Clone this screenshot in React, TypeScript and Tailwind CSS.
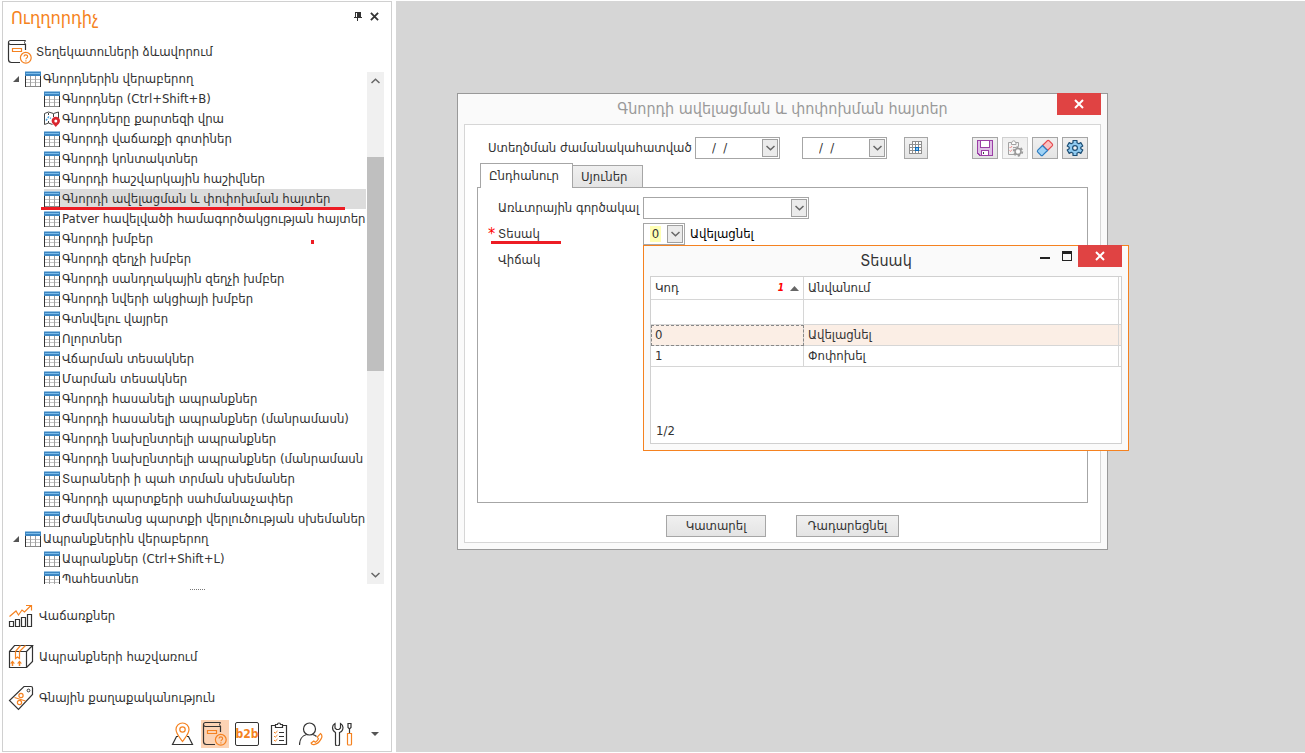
import { useState } from 'react';
import type { ReactNode } from 'react';

const CUSTOMER_ITEMS = [
  'Գնորդներ (Ctrl+Shift+B)',
  'Գնորդները քարտեզի վրա',
  'Գնորդի վաճառքի գոտիներ',
  'Գնորդի կոնտակտներ',
  'Գնորդի հաշվարկային հաշիվներ',
  'Գնորդի ավելացման և փոփոխման հայտեր',
  'Patver հավելվածի համագործակցության հայտեր',
  'Գնորդի խմբեր',
  'Գնորդի զեղչի խմբեր',
  'Գնորդի սանդղակային զեղչի խմբեր',
  'Գնորդի նվերի ակցիայի խմբեր',
  'Գտնվելու վայրեր',
  'Ոլորտներ',
  'Վճարման տեսակներ',
  'Մարման տեսակներ',
  'Գնորդի հասանելի ապրանքներ',
  'Գնորդի հասանելի ապրանքներ (մանրամասն)',
  'Գնորդի նախընտրելի ապրանքներ',
  'Գնորդի նախընտրելի ապրանքներ (մանրամասն',
  'Տարաների ի պահ տրման սխեմաներ',
  'Գնորդի պարտքերի սահմանաչափեր',
  'Ժամկետանց պարտքի վերլուծության սխեմաներ',
];

const GROUPS = [
  { title: 'Գնորդներին վերաբերող', items: CUSTOMER_ITEMS },
  { title: 'Ապրանքներին վերաբերող', items: ['Ապրանքներ (Ctrl+Shift+L)', 'Պահեստներ'] },
];

const MAP_ITEM = CUSTOMER_ITEMS[1];

const TYPES = [
  { code: '0', name: 'Ավելացնել' },
  { code: '1', name: 'Փոփոխել' },
];

/* ---------- icons ---------- */

function TableIcon() {
  return (
    <svg width="16" height="16" viewBox="0 0 16 16" shapeRendering="crispEdges" className="shrink-0">
      <rect width="16" height="16" fill="#fff" />
      <rect width="16" height="1" fill="#9ac4e4" />
      <rect y="1" width="16" height="4" fill="#3c86c2" />
      <rect x="1" y="2" width="14" height="1" fill="#7cbcea" />
      <path d="M1 8.500h14M1 11.500h14" stroke="#c4c4c4" />
      <path d="M5.500 5v10M10.500 5v10" stroke="#a0a0a0" />
      <path d="M0.500 5v11M15.500 5v11" stroke="#333" />
      <path d="M1 15.500h14" stroke="#8a8a8a" />
    </svg>
  );
}

function MapIcon() {
  return (
    <svg width="16" height="16" viewBox="0 0 16 16" fill="none" className="shrink-0">
      <path d="M.5 2.500 4.500 1l5 1.500L14.500 1v6M.5 2.500v11L4.500 12l4 1.500" stroke="#444" />
      <path d="M4.500 2v2M9.500 3v3M4.500 10v2" stroke="#444" />
      <path d="M2 9.500 4.500 6 7 7.500" stroke="#4aa3df" strokeWidth="1.400" strokeDasharray="2 1" />
      <path d="M11.800 16c-2-2.400-4.200-3.800-4.200-6a4.200 4.200 0 1 1 8.400 0c0 2.200-2.200 3.600-4.200 6z" fill="#d9262f" />
      <circle cx="11.800" cy="10" r="1.500" fill="#fff" />
    </svg>
  );
}

function BookIcon() {
  return (
    <svg width="26" height="26" viewBox="0 0 26 26" fill="none" className="shrink-0">
      <path d="M18.500 11V5.500H3.500a2 2 0 0 1 0-4h15M1.500 3.500v17a3 3 0 0 0 3 3H13" stroke="#333" strokeWidth="1.200" />
      <path d="M18.500 1.500l-1 2 1 2" stroke="#333" />
      <path d="M5.500 9.500h9v3h-9z" stroke="#f58220" strokeWidth="1.200" />
      <circle cx="18.800" cy="18.800" r="5.400" stroke="#f58220" strokeWidth="1.200" />
      <path d="M17 17.600c0-2.300 3.600-2.300 3.600-.2 0 1.400-1.700 1.400-1.700 2.900M18.900 21.300v1.200" stroke="#f58220" strokeWidth="1.100" />
    </svg>
  );
}

function SalesIcon() {
  return (
    <svg width="26" height="26" viewBox="0 0 26 26" fill="none" className="shrink-0">
      <path d="M1.500 18.500h4v5h-4zM7.500 16.500h4v7h-4zM13.500 14.500h4v9h-4zM19.500 11.500h4v12h-4z" stroke="#333" strokeWidth="1.200" />
      <path d="M1.500 13.500 8 8l2.500 4L14 7l2.500 2L23 2.500M18 2.500h5.500v5" stroke="#f58220" strokeWidth="1.200" />
    </svg>
  );
}

function BoxIcon() {
  return (
    <svg width="26" height="26" viewBox="0 0 26 26" fill="none" className="shrink-0">
      <path d="M1.500 7.500h17v16h-17zM1.500 7.500l5-6h18l-6 6M24.500 1.500v16l-6 6" stroke="#333" strokeWidth="1.200" />
      <path d="M7.500 7.500v7l2-1.500 2 1.500v-7l6-6M7.500 7.500l5-6" stroke="#f58220" strokeWidth="1.200" />
      <path d="M4.500 22v-4M11.500 22v-4" stroke="#f58220" strokeWidth="1.500" />
      <path d="M2 19.500 4.500 16.500 7 19.500zM9 19.500l2.500-3 2.500 3z" fill="#f58220" />
    </svg>
  );
}

function PriceIcon() {
  return (
    <svg width="26" height="26" viewBox="0 0 26 26" fill="none" className="shrink-0">
      <path d="M16 1.500h7a1.500 1.500 0 0 1 1.500 1.500v6.500L10.500 24.500l-9-9z" stroke="#333" strokeWidth="1.200" />
      <circle cx="20.500" cy="5.500" r="1.400" stroke="#333" />
      <path d="M6.500 12.500l11 3.500" stroke="#f58220" strokeWidth="1.200" />
      <circle cx="13" cy="10.500" r="2.100" stroke="#f58220" strokeWidth="1.200" />
      <circle cx="11.500" cy="17.500" r="2.100" stroke="#f58220" strokeWidth="1.200" />
    </svg>
  );
}

function RouteIcon() {
  return (
    <svg width="24" height="24" viewBox="0 0 24 24" fill="none">
      <path d="M7 14.500H5.500L1.500 22.500h20l-4-8H16" stroke="#333" strokeWidth="1.200" />
      <path d="M11.500 19.500C8 14.500 5 11.500 5 7.500a6.500 6.500 0 0 1 13 0c0 4-3 7-6.500 12z" stroke="#f58220" strokeWidth="1.200" />
      <circle cx="11.500" cy="7.500" r="2.700" stroke="#f58220" strokeWidth="1.200" />
    </svg>
  );
}

function TasksIcon() {
  return (
    <svg width="24" height="24" viewBox="0 0 24 24" fill="none">
      <path d="M8 3.500H4.500v19h15v-19H16" stroke="#333" strokeWidth="1.200" />
      <path d="M8.500 5.500v-3h2a1.500 1.500 0 0 1 3 0h2v3z" stroke="#333" strokeWidth="1.200" />
      <path d="M12 10.500h5M12 14.500h5M12 18.500h5" stroke="#333" strokeWidth="1.200" />
      <path d="M7 10l1.200 1.200L10.500 9M7 14l1.200 1.200 2.300-2.200M7 18l1.200 1.200 2.300-2.200" stroke="#f58220" />
    </svg>
  );
}

function ContactIcon() {
  return (
    <svg width="24" height="24" viewBox="0 0 24 24" fill="none">
      <circle cx="10.500" cy="7" r="6" stroke="#333" strokeWidth="1.200" />
      <path d="M.5 23c0-5 2.500-9.500 7-10.500M13.500 12.500c1.800.3 3 1 4 2" stroke="#333" strokeWidth="1.200" />
      <path d="M21.500 11.500c1.600 1.200 1.800 3.200.6 5.400-1.700 3.100-4.500 5.300-7 5.700-1.600.2-2.700-.6-3-1.600l2.700-2 1.600 1.200c1.400-.8 2.500-2 3.100-3.400l-1.200-1.700z" stroke="#f58220" strokeWidth="1.200" />
    </svg>
  );
}

function ToolsIcon() {
  return (
    <svg width="24" height="24" viewBox="0 0 24 24" fill="none">
      <path d="M4.500 22a2 2 0 0 0 4 0V10.500C11 9.500 12 7.500 12 5.500c0-1.800-1-3.200-2.500-4V6L8 7.500H5.500L4 6V1.500C2.500 2.300 1.500 3.700 1.500 5.500c0 2 1 4 3 5z" stroke="#333" strokeWidth="1.200" />
      <path d="M17 1.500h3v4L18.500 7 17 5.500zM18.500 7v4" stroke="#333" strokeWidth="1.200" />
      <path d="M16.500 11.500h4V22a1 1 0 0 1-1 1h-2a1 1 0 0 1-1-1z" stroke="#f58220" strokeWidth="1.200" />
    </svg>
  );
}

function PinIcon() {
  return (
    <svg width="8" height="9" viewBox="0 0 8 9" shapeRendering="crispEdges">
      <path d="M1 0h6v5h1v1H4v3H3V6H0V5h1zM2 1v4h1V1z" fill="#333" fillRule="evenodd" />
    </svg>
  );
}

function CrossIcon({ size, color }: { size: number; color: string }) {
  return (
    <svg width={size} height={size} viewBox="0 0 10 10">
      <path d="M1 1l8 8M9 1L1 9" stroke={color} strokeWidth="2" />
    </svg>
  );
}

function Chevron({ up = false }: { up?: boolean }) {
  return (
    <svg width="9" height="6" viewBox="0 0 9 6" fill="none">
      <path d={up ? 'M.5 5l4-3.800L8.500 5' : 'M.5 1l4 3.800L8.500 1'} stroke="#666" strokeWidth="1.500" />
    </svg>
  );
}

function GridIcon() {
  return (
    <svg width="14" height="14" viewBox="0 0 14 14" shapeRendering="crispEdges">
      <path d="M3 0h10v13H0V3h3z" fill="#fff" />
      <path d="M3 .5h10M0 3.500h13M0 6.500h13M0 9.500h13M0 12.500h13M.5 3v10M3.500 0v13M6.500 0v13M9.500 0v13M12.500 0v13" stroke="#8f8f8f" />
      <rect x="6" y="6" width="4" height="4" fill="#0a6cbd" />
      <rect x="7" y="7" width="2" height="2" fill="#7cc4f5" />
    </svg>
  );
}

function SaveIcon() {
  return (
    <svg width="18" height="18" viewBox="0 0 18 18" shapeRendering="crispEdges">
      <path d="M1.500 1.500h15v15h-12l-3-2z" fill="#dfbfe6" stroke="#9b3fa6" strokeWidth="1.200" />
      <rect x="4.500" y="1.500" width="9" height="7" fill="#fff" stroke="#9b3fa6" />
      <rect x="5.500" y="11.500" width="7" height="5" fill="#fff" stroke="#9b3fa6" />
      <rect x="7" y="13" width="1" height="2" fill="#444" />
    </svg>
  );
}

function ChecklistIcon() {
  return (
    <svg width="18" height="18" viewBox="0 0 18 18" fill="none">
      <path d="M8.500 15.500h-6v-12h3M9.500 3.500h3v4" stroke="#a2a2a2" />
      <path d="M5.500 5.500v-2H6a1.700 1.700 0 0 1 3.400 0h.6v2z" fill="#fff" stroke="#a2a2a2" />
      <path d="M3.500 8l1 1L6 7M3.500 11.500l1 1 1.500-2" stroke="#ef8f8f" />
      <path d="M7 8.500h3M7 11.500h2" stroke="#a2a2a2" />
      <circle cx="12" cy="12.500" r="3" stroke="#9a9a9a" strokeWidth="1.600" />
      <circle cx="12" cy="12.500" r="4.400" stroke="#9a9a9a" strokeWidth="1.600" strokeDasharray="2.300 2.300" />
      <circle cx="12" cy="12.500" r="1.600" fill="#fff" />
    </svg>
  );
}

function EraserIcon() {
  return (
    <svg width="18" height="18" viewBox="0 0 18 18" strokeLinejoin="round">
      <path d="M6.500 6.500 11.200 1.800a1.500 1.500 0 0 1 2 0l3 3a1.500 1.500 0 0 1 0 2L11.500 11.500z" fill="#fbc1c1" stroke="#e5484d" strokeWidth="1.200" />
      <path d="M6.500 6.500l5 5-4.700 4.700a1.500 1.500 0 0 1-2 0l-3-3a1.500 1.500 0 0 1 0-2z" fill="#9fd2f5" stroke="#2b7cc0" strokeWidth="1.200" />
    </svg>
  );
}

function GearIcon() {
  return (
    <svg width="18" height="18" viewBox="0 0 18 18" strokeLinejoin="round">
      <path
        d="M7 1.500h4v2.200l1.800 1 2-1.100 2 3.400-2 1.200v1.600l2 1.200-2 3.400-2-1.100-1.800 1v2.200H7v-2.200l-1.800-1-2 1.100-2-3.400 2-1.200V8.200l-2-1.200 2-3.400 2 1.100 1.800-1z"
        fill="#8fcaf0"
        stroke="#1d4e74"
        strokeWidth="1.200"
      />
      <circle cx="9" cy="9" r="2.400" fill="#f4f4f4" stroke="#1d4e74" strokeWidth="1.200" />
    </svg>
  );
}

/* ---------- controls ---------- */

function DropButton({ label }: { label: string }) {
  return (
    <button
      aria-label={label}
      className="flex h-[18px] w-4 shrink-0 items-center justify-center border border-[#a0a0a0] bg-[#ebebeb]"
    >
      <Chevron />
    </button>
  );
}

function DateField({ label }: { label: string }) {
  return (
    <div className="flex h-[22px] w-[85px] items-center border border-[#a6a6a6] bg-white pr-px">
      <input aria-label={label} defaultValue="/  /" className="w-full min-w-0 flex-1 pl-4 whitespace-pre outline-none" />
      <DropButton label={label + ' ▾'} />
    </div>
  );
}

function ToolButton({ label, disabled, children }: { label: string; disabled?: boolean; children: ReactNode }) {
  return (
    <button
      aria-label={label}
      disabled={disabled}
      className="flex h-[22px] w-[26px] items-center justify-center border border-[#a6a6a6] bg-linear-to-b from-[#f0f0f0] to-[#e4e4e4] disabled:border-[#d0d0d0] disabled:to-[#f5f5f5]"
    >
      {children}
    </button>
  );
}

function CloseButton() {
  return (
    <button aria-label="Փակել" className="flex h-[22px] w-11 items-center justify-center bg-[#e04343]">
      <CrossIcon size={10} color="#fff" />
    </button>
  );
}

/* ---------- navigator ---------- */

function TreeGroup({ title, items, selected, onSelect }: {
  title: string;
  items: string[];
  selected: string;
  onSelect: (item: string) => void;
}) {
  return (
    <li>
      <button className="flex h-5 w-full items-center gap-0.5 pl-2 text-left whitespace-nowrap">
        <svg width="12" height="8" viewBox="0 0 12 8">
          <path d="M8 1v6H2z" fill="#555" />
        </svg>
        <TableIcon />
        <span>{title}</span>
      </button>
      <ul>
        {items.map((item) => (
          <li key={item} className="pl-[41px]">
            <button
              onClick={() => onSelect(item)}
              className={`flex h-5 w-full items-center gap-0.5 text-left whitespace-nowrap ${item === selected ? 'bg-[#dcdcdc]' : ''}`}
            >
              {item === MAP_ITEM ? <MapIcon /> : <TableIcon />}
              <span>{item}</span>
            </button>
          </li>
        ))}
      </ul>
    </li>
  );
}

function Navigator() {
  const [selected, setSelected] = useState(CUSTOMER_ITEMS[5]);

  return (
    <aside className="relative flex w-[390px] shrink-0 flex-col border border-[#d0d0d0] bg-white">
      <header className="flex h-8 items-center pr-3 pl-2">
        <h1 className="flex-1 text-lg text-[#f58220]">Ուղղորդիչ</h1>
        <div className="flex items-center gap-2 pb-1">
          <button aria-label="Ամրացնել"><PinIcon /></button>
          <button aria-label="Փակել"><CrossIcon size={9} color="#333" /></button>
        </div>
      </header>
      <div className="flex h-[35px] items-center gap-[3px] pl-1">
        <BookIcon />
        <h2>Տեղեկատուների ձևավորում</h2>
      </div>

      <div className="flex min-h-0 flex-1 pr-[7px]">
        <ul className="min-w-0 flex-1 overflow-hidden">
          {GROUPS.map((group) => (
            <TreeGroup key={group.title} {...group} selected={selected} onSelect={setSelected} />
          ))}
        </ul>
        <div className="mt-[3px] ml-px flex w-[17px] shrink-0 flex-col bg-[#f0f0f0]">
          <button aria-label="Վերև" className="flex h-[18px] items-center justify-center"><Chevron up /></button>
          <div className="flex flex-1 flex-col">
            <div className="h-[14%]" />
            <div className="h-[45%] bg-[#bfbfbf]" />
          </div>
          <button aria-label="Ներքև" className="flex h-[18px] items-center justify-center"><Chevron /></button>
        </div>
      </div>

      <div className="flex h-[11px] items-center justify-center">
        <div className="w-[15px] border-t border-dotted border-[#777]" />
      </div>

      <nav>
        <button className="flex h-[41px] w-full items-center gap-[5px] pl-[5px]"><SalesIcon />Վաճառքներ</button>
        <button className="flex h-[41px] w-full items-center gap-[5px] pl-[5px]"><BoxIcon />Ապրանքների հաշվառում</button>
        <button className="flex h-[41px] w-full items-center gap-[5px] pl-[5px]"><PriceIcon />Գնային քաղաքականություն</button>
      </nav>
      <div className="flex h-[33px] items-center justify-end gap-1 pr-3 pb-0.5">
        <button aria-label="Քարտեզ" className="flex size-7 items-center justify-center"><RouteIcon /></button>
        <button aria-label="Տեղեկատուներ" className="flex size-7 items-center justify-center bg-[#fcd3b4]"><BookIcon /></button>
        <button className="flex size-7 items-center justify-center">
          <span className="flex size-6 items-center justify-center rounded-xs border border-[#333] text-xs font-bold text-[#f58220]">
            b2b
          </span>
        </button>
        <button aria-label="Առաջադրանքներ" className="flex size-7 items-center justify-center"><TasksIcon /></button>
        <button aria-label="Կոնտակտներ" className="flex size-7 items-center justify-center"><ContactIcon /></button>
        <button aria-label="Գործիքներ" className="flex size-7 items-center justify-center"><ToolsIcon /></button>
        <button aria-label="Ավելին" className="ml-2.5 flex w-2 justify-center">
          <svg width="8" height="4" viewBox="0 0 8 4"><path d="M0 0h8L4 4z" fill="#555" /></svg>
        </button>
      </div>

      {/* red pen marks */}
      <div className="absolute top-[205px] left-[38px] h-[3px] w-[304px] bg-[#ed1c24]" />
      <div className="absolute top-[238px] left-[308px] h-1 w-[3px] bg-[#ed1c24]" />
    </aside>
  );
}

/* ---------- windows ---------- */

function RequestsDialog() {
  return (
    <section className="absolute top-[92px] left-[61px] flex h-[457px] w-[651px] flex-col border border-[#999] bg-[#fafafa] px-1.5 pb-1.5">
      <header className="flex h-[30px] shrink-0 items-center justify-center text-base text-[#999]">
        <h2>Գնորդի ավելացման և փոփոխման հայտեր</h2>
        <div className="absolute -top-px right-1.5"><CloseButton /></div>
      </header>

      <div className="flex flex-1 flex-col border border-[#d6d6d6] bg-white px-3 pb-[5px]">
        <div className="flex pt-3 pl-[11px]">
          <span className="mr-1.5 w-[201px] leading-[22px] whitespace-nowrap">Ստեղծման ժամանակահատված</span>
          <DateField label="Սկիզբ" />
          <div className="ml-[22px]"><DateField label="Վերջ" /></div>
          <button aria-label="Օրացույց" className="ml-[17px] flex h-[22px] w-6 items-center justify-center border border-[#a6a6a6] bg-linear-to-b from-[#f0f0f0] to-[#e4e4e4]">
            <GridIcon />
          </button>
          <div className="ml-auto flex gap-1">
            <ToolButton label="Պահպանել"><SaveIcon /></ToolButton>
            <ToolButton label="Ստուգել" disabled><ChecklistIcon /></ToolButton>
            <ToolButton label="Մաքրել"><EraserIcon /></ToolButton>
            <ToolButton label="Կարգավորումներ"><GearIcon /></ToolButton>
          </div>
        </div>

        <div role="tablist" className="mt-1 flex items-end pl-[3px]">
          <button role="tab" aria-selected="true" className="relative z-10 -mb-px h-[25px] w-[93px] border border-b-0 border-[#a6a6a6] bg-white pl-2 text-left">
            Ընդհանուր
          </button>
          <button role="tab" aria-selected="false" className="h-[22px] w-[70px] border border-b-0 border-l-0 border-[#a6a6a6] bg-linear-to-b from-[#f0f0f0] to-[#e4e4e4] pl-2 text-left">
            Սյուներ
          </button>
        </div>

        <div role="tabpanel" className="relative flex flex-1 flex-col gap-1 border border-[#a6a6a6] pt-[9px] pl-5">
          <div className="flex h-[22px] items-center">
            <label htmlFor="agent" className="w-[145px] whitespace-nowrap">Առևտրային գործակալ</label>
            <div className="flex h-[22px] w-[166px] items-center border border-[#a6a6a6] bg-white pr-px">
              <input id="agent" className="min-w-0 flex-1 px-1 outline-none" />
              <DropButton label="Ընտրել գործակալ" />
            </div>
          </div>
          <div className="relative flex h-[22px] items-center">
            <span className="absolute -left-2.5 text-base text-[#ff0000]">*</span>
            <label htmlFor="type" className="w-[145px]">Տեսակ</label>
            <div className="flex h-[22px] w-[42px] items-center border border-[#a6a6a6] bg-white pr-px">
              <input
                id="type"
                defaultValue="0"
                className="ml-1.5 h-4 w-[11px] bg-[#ffffb4] text-center outline-none"
              />
              <span className="flex-1" />
              <DropButton label="Ընտրել տեսակը" />
            </div>
            <span className="pl-[5px] text-black">Ավելացնել</span>
          </div>
          <div className="flex h-[22px] items-center">Վիճակ</div>
          <div className="absolute top-[53px] left-[13px] h-[3px] w-[70px] bg-[#ed1c24]" />
        </div>

        <div className="flex justify-center gap-[30px] pt-3">
          <button className="h-[22px] w-[100px] border border-[#a6a6a6] bg-linear-to-b from-[#f0f0f0] to-[#e4e4e4]">Կատարել</button>
          <button className="h-[22px] w-[103px] border border-[#a6a6a6] bg-linear-to-b from-[#f0f0f0] to-[#e4e4e4]">Դադարեցնել</button>
        </div>
      </div>
    </section>
  );
}

function TypeWindow() {
  return (
    <section className="absolute top-[244px] left-[247px] flex h-[206px] w-[486px] flex-col border border-[#f58220] bg-[#fafafa] px-1.5 pb-1.5">
      <header className="flex h-[30px] shrink-0 items-center justify-center text-base">
        <h2>Տեսակ</h2>
        <div className="absolute -top-px right-1.5 flex">
          <button aria-label="Թաքցնել" className="flex h-[22px] w-[22px] items-center justify-center pt-1">
            <span className="h-0.5 w-2.5 bg-[#222]" />
          </button>
          <button aria-label="Մեծացնել" className="flex h-[22px] w-[22px] items-center justify-center">
            <span className="h-2.5 w-2.5 border border-t-[3px] border-[#222]" />
          </button>
          <CloseButton />
        </div>
      </header>

      <div className="flex flex-1 flex-col justify-between border border-[#d0d0d0] bg-white">
        <table className="w-full table-fixed border-separate border-spacing-0 text-left">
          <colgroup>
            <col className="w-[153px]" />
            <col />
            <col className="w-0.5" />
          </colgroup>
          <thead>
            <tr className="h-[23px] *:border-b *:border-[#d6d6d6]">
              <th className="border-r p-0 px-1 font-normal">
                <div className="flex items-center">
                  <span className="flex-1">Կոդ</span>
                  <span className="mr-1.5 text-[10px] font-bold text-[#ff0000] italic">1</span>
                  <svg width="9" height="5" viewBox="0 0 9 5"><path d="M0 5h9L4.500 0z" fill="#666" /></svg>
                </div>
              </th>
              <th className="border-r p-0 px-1 font-normal">Անվանում</th>
              <td className="p-0" />
            </tr>
            <tr className="h-[25px] *:border-b *:border-[#d6d6d6]">
              <td className="border-r p-0" />
              <td className="border-r p-0" />
              <td className="p-0" />
            </tr>
          </thead>
          <tbody>
            {TYPES.map((type, i) => (
              <tr key={type.code} className={`h-[21px] *:border-b *:border-[#d6d6d6] ${i === 0 ? 'bg-[#fbeee5]' : ''}`}>
                <td
                  className={`border-r p-0 px-1 ${i === 0 ? 'outline outline-dashed -outline-offset-1 outline-[#888]' : ''}`}
                >
                  {type.code}
                </td>
                <td className="border-r p-0 px-1">{type.name}</td>
                <td className="p-0" />
              </tr>
            ))}
          </tbody>
        </table>
        <div className="pb-1 pl-[5px]">1/2</div>
      </div>
    </section>
  );
}

export default function App() {
  return (
    <div className="flex h-screen gap-1 bg-white py-px pl-0.5 font-['DejaVu_Sans_Condensed','DejaVu_Sans',sans-serif] text-[13px] leading-4 text-[#333]">
      <Navigator />
      <main className="relative flex-1 overflow-hidden bg-[#d6d6d6]">
        <RequestsDialog />
        <TypeWindow />
      </main>
    </div>
  );
}
